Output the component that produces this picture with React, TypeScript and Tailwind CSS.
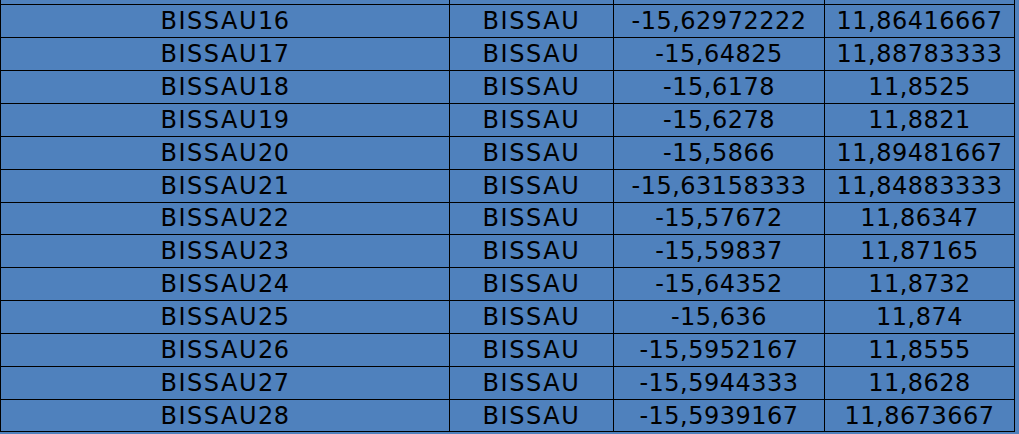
import React from "react"

const rows: [string, string, string, string][] = [
  ["BISSAU15", "BISSAU", "-15,633333", "11,8833333"],
  ["BISSAU16", "BISSAU", "-15,62972222", "11,86416667"],
  ["BISSAU17", "BISSAU", "-15,64825", "11,88783333"],
  ["BISSAU18", "BISSAU", "-15,6178", "11,8525"],
  ["BISSAU19", "BISSAU", "-15,6278", "11,8821"],
  ["BISSAU20", "BISSAU", "-15,5866", "11,89481667"],
  ["BISSAU21", "BISSAU", "-15,63158333", "11,84883333"],
  ["BISSAU22", "BISSAU", "-15,57672", "11,86347"],
  ["BISSAU23", "BISSAU", "-15,59837", "11,87165"],
  ["BISSAU24", "BISSAU", "-15,64352", "11,8732"],
  ["BISSAU25", "BISSAU", "-15,636", "11,874"],
  ["BISSAU26", "BISSAU", "-15,5952167", "11,8555"],
  ["BISSAU27", "BISSAU", "-15,5944333", "11,8628"],
  ["BISSAU28", "BISSAU", "-15,5939167", "11,8673667"],
]

export default function App() {
  return (
    <div className="w-[1019px] h-[434px] overflow-hidden bg-[#4f81bd] text-black font-['DejaVu_Sans',Verdana,sans-serif] text-[24px] leading-none">
      <div className="w-[1015px] mt-[-27.4px]">
        {rows.map((r, i) => (
          <div
            key={i}
            className="grid grid-cols-[450px_164px_211px_190px] h-[32.85px] border-b border-black"
          >
            <div className="border-l border-r border-black flex items-center justify-center">
              <span className="tracking-[1.5px]">{r[0].slice(0, 6)}</span>
              <span className="tracking-[0.5px]">{r[0].slice(6)}</span>
            </div>
            <div className="border-r border-black flex items-center justify-center tracking-[1.6px]">{r[1]}</div>
            <div className="border-r border-black flex items-center justify-center tracking-[0.5px]">{r[2]}</div>
            <div className="border-r border-black flex items-center justify-center tracking-[0.5px]">{r[3]}</div>
          </div>
        ))}
      </div>
    </div>
  )
}
